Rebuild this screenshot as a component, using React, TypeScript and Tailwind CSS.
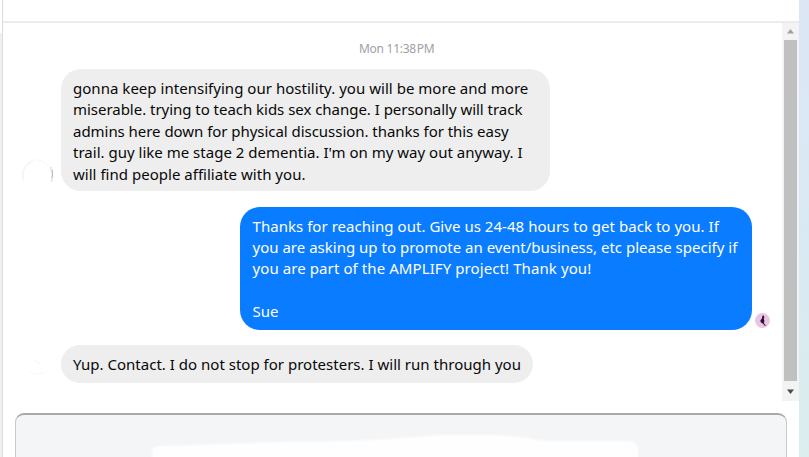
import React from "react";

type Line = {
  text: string;
  tracking: string;
};

type BubbleProps = {
  lines: Line[];
  className: string;
};

const firstMessage: Line[] = [
  { text: "gonna keep intensifying our hostility. you will be more and more", tracking: "tracking-[0.03px]" },
  { text: "miserable. trying to teach kids sex change. I personally will track", tracking: "tracking-[-0.03px]" },
  { text: "admins here down for physical discussion. thanks for this easy", tracking: "tracking-[-0.04px]" },
  { text: "trail. guy like me stage 2 dementia. I'm on my way out anyway. I", tracking: "tracking-[0.01px]" },
  { text: "will find people affiliate with you.", tracking: "tracking-[0.02px]" },
];

const reply: Line[] = [
  { text: "Thanks for reaching out. Give us 24-48 hours to get back to you. If", tracking: "tracking-[0.04px]" },
  { text: "you are asking up to promote an event/business, etc please specify if", tracking: "tracking-[0.01px]" },
  { text: "you are part of the AMPLIFY project! Thank you!", tracking: "tracking-[0.09px]" },
  { text: "\u00a0", tracking: "tracking-normal" },
  { text: "Sue", tracking: "tracking-[0.01px]" },
];

const lastMessage: Line[] = [
  { text: "Yup. Contact. I do not stop for protesters. I will run through you", tracking: "tracking-[0.01px]" },
];

const Bubble = ({ lines, className }: BubbleProps) => {
  return (
    <div className={`whitespace-nowrap text-[15px] leading-[21.4px] ${className}`}>
      {lines.map((line, i) => (
        <p key={i} className={line.tracking}>
          {line.text}
        </p>
      ))}
    </div>
  );
};

const App = () => {
  return (
    <div className="flex h-[457px] w-[809px] overflow-hidden bg-white font-['Noto_Sans','Open_Sans',sans-serif]">
      {/* Left edge */}
      <div className="w-[3px] shrink-0 border-r border-[#dcdce0] pt-[33px]">
        <div className="h-full bg-[#f0f0f3]" />
      </div>

      <div className="flex w-[796px] shrink-0 flex-col">
        <div className="h-[23px] shrink-0 border-b-2 border-[#ececec]" />

        <div className="flex h-[378px] shrink-0">
          {/* Messages */}
          <div className="w-[779px] pt-[17px]">
            <p className="ml-[356px] h-[29px] text-[12px] leading-[18px] tracking-[-0.28px] text-[#a0a1a4]">
              Mon 11:38{"\u200a"}PM
            </p>

            <div className="flex h-[122px] items-end">
              <svg className="mb-px ml-[18px] h-8 w-8" viewBox="0 0 32 32" fill="none">
                <path d="M3 23A15 15 0 0 1 12 3" stroke="#f4f4f4" strokeWidth="1.5" />
                <path d="M14 2A14 14 0 0 1 29 11" stroke="#f8f8f8" />
                <path d="M29.5 9Q33 16 30.5 24" stroke="#e8e8e8" strokeWidth="2" />
                <path d="M31 12Q32.5 16 31 20" stroke="#b8b8b8" />
              </svg>
              <Bubble
                lines={firstMessage}
                className="ml-2 h-[122px] w-[489px] rounded-[20px] bg-[#eeeeee] pl-3 pt-[9px] text-[#080809]"
              />
            </div>

            <div className="mt-[15.5px] flex h-[123px] items-end pl-[237px]">
              <Bubble
                lines={reply}
                className="h-[123px] w-[512px] rounded-[20px] bg-[#0a7cff] pl-[12.5px] pt-[9px] text-white"
              />
              <svg className="mb-[2px] ml-[3px] h-[15px] w-[15px]" viewBox="0 0 15 15">
                <circle cx="7.5" cy="7.5" r="7.4" fill="#ebc3de" />
                <path d="M8.5 2.2L9.3 4.2L8.8 6L9.4 8L8.8 10L10.8 12.7L10 13L7.8 10.5L5.7 9.3L5.4 7.2L7 5.6L7.3 3Z" fill="#211044" />
              </svg>
            </div>

            <div className="mt-[15.5px] flex h-[38px] items-center pl-[25px]">
              <svg className="h-6 w-6" viewBox="0 0 24 24" fill="none">
                <path d="M7 8l3 3 3 0" stroke="#f4f4f4" />
                <path d="M2 20q7 4 15 0" stroke="#f8f8f8" />
              </svg>
              <Bubble
                lines={lastMessage}
                className="ml-[9px] h-[37.5px] w-[472px] rounded-full bg-[#eeeeee] pl-3 pt-[9px] text-[#080809]"
              />
            </div>
          </div>

          {/* Scrollbar */}
          <div className="flex w-[17px] flex-col items-center bg-[#f3f3f3]">
            <svg className="h-[17px] w-[17px]" viewBox="0 0 17 17">
              <path d="M5 10.5L8.5 6L12 10.5Z" fill="#a0a0a0" />
            </svg>
            <div className="h-[341px] w-[13px] bg-[#c0c0c0]" />
            <svg className="h-5 w-[17px]" viewBox="0 0 17 20">
              <path d="M5 8.5L8.5 13L12 8.5Z" fill="#4a4a4a" />
            </svg>
          </div>
        </div>

        {/* Composer */}
        <div className="ml-3 mt-3 h-[60px] w-[772px] shrink-0 overflow-hidden rounded-[9px] border border-t-2 border-[#c8c9cb] border-t-[#a9a9a9] bg-[#f4f5f7]">
          <svg className="h-[58px] w-[770px] blur-[1px]" viewBox="0 0 770 58">
            <path
              d="M136 58V36Q136 32 141 31L205 29L265 27L330 26L375 24L420 20H480L512 23L530 26H612Q622 27 622 34V58Z"
              fill="#fefefe"
            />
          </svg>
        </div>
      </div>

      {/* Right edge */}
      <div className="w-[10px] shrink-0 bg-linear-to-b from-[#dce6f5] via-[#d9e9f4] to-[#dceeee]" />
    </div>
  );
};

export default App;
